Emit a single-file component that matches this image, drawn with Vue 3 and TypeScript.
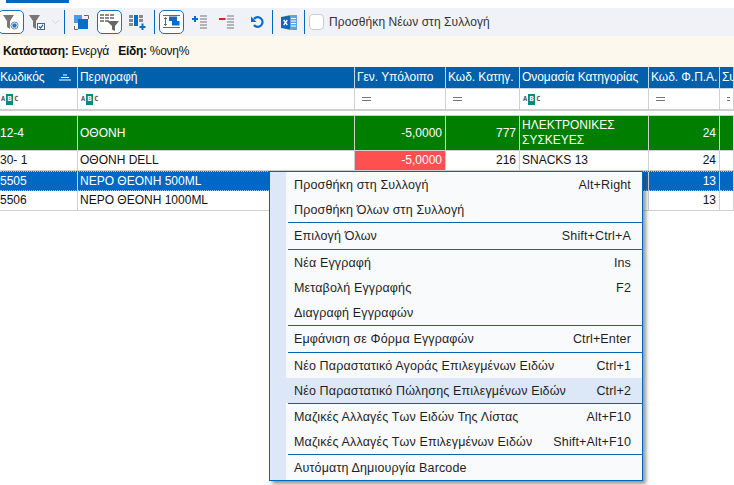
<script setup lang="ts">
type Cell = { text: string; right?: boolean; bg?: string };
type Row = { cls: string; cells: Cell[] };
type MenuItem = { label: string; key?: string; active?: boolean };
type MenuGroup = { tall?: boolean; items: MenuItem[] };

const columns = [
  { title: "Κωδικός", filter: "abc", sort: true },
  { title: "Περιγραφή", filter: "abc" },
  { title: "Γεν. Υπόλοιπο", filter: "eq" },
  { title: "Κωδ. Κατηγ.", filter: "eq" },
  { title: "Ονομασία Κατηγορίας", filter: "abc" },
  { title: "Κωδ. Φ.Π.Α.", filter: "eq" },
  { title: "Συ", filter: "eq" },
];

const rows: Row[] = [
  {
    cls: "row-green",
    cells: [
      { text: "12-4" },
      { text: "ΟΘΟΝΗ" },
      { text: "-5,0000", right: true },
      { text: "777", right: true },
      { text: "ΗΛΕΚΤΡΟΝΙΚΕΣ ΣΥΣΚΕΥΕΣ" },
      { text: "24", right: true },
      { text: "" },
    ],
  },
  {
    cls: "row-plain",
    cells: [
      { text: "30- 1" },
      { text: "ΟΘΟΝΗ DELL" },
      { text: "-5,0000", right: true, bg: "neg" },
      { text: "216", right: true },
      { text: "SNACKS 13" },
      { text: "24", right: true },
      { text: "" },
    ],
  },
  {
    cls: "row-selected",
    cells: [
      { text: "5505" },
      { text: "ΝΕΡΟ ΘΕΟΝΗ 500ML" },
      { text: "" },
      { text: "" },
      { text: "" },
      { text: "13", right: true },
      { text: "" },
    ],
  },
  {
    cls: "row-plain",
    cells: [
      { text: "5506" },
      { text: "ΝΕΡΟ ΘΕΟΝΗ 1000ML" },
      { text: "" },
      { text: "" },
      { text: "" },
      { text: "13", right: true },
      { text: "" },
    ],
  },
];

const menuGroups: MenuGroup[] = [
  {
    items: [
      { label: "Προσθήκη στη Συλλογή", key: "Alt+Right" },
      { label: "Προσθήκη Όλων στη Συλλογή" },
    ],
  },
  { items: [{ label: "Επιλογή Όλων", key: "Shift+Ctrl+A" }] },
  {
    tall: true,
    items: [
      { label: "Νέα Εγγραφή", key: "Ins" },
      { label: "Μεταβολή Εγγραφής", key: "F2" },
      { label: "Διαγραφή Εγγραφών" },
    ],
  },
  { items: [{ label: "Εμφάνιση σε Φόρμα Εγγραφών", key: "Ctrl+Enter" }] },
  {
    tall: true,
    items: [
      { label: "Νέο Παραστατικό Αγοράς Επιλεγμένων Ειδών", key: "Ctrl+1" },
      { label: "Νέο Παραστατικό Πώλησης Επιλεγμένων Ειδών", key: "Ctrl+2", active: true },
    ],
  },
  {
    items: [
      { label: "Μαζικές Αλλαγές Των Ειδών Της Λίστας", key: "Alt+F10" },
      { label: "Μαζικές Αλλαγές Των Επιλεγμένων Ειδών", key: "Shift+Alt+F10" },
    ],
  },
  { items: [{ label: "Αυτόματη Δημιουργία Barcode" }] },
];
</script>

<template>
  <div class="page">
    <div class="top-strip"><div class="top-tab"></div></div>

    <div class="toolbar">
      <button class="tool framed t-filter">
        <svg width="16" height="16" viewBox="0 0 16 16">
          <path d="M0 1h11L7 7v8L4 13V7z" fill="#777" />
          <circle cx="11.5" cy="11.5" r="3.5" fill="#fff" stroke="#7a8694" />
          <circle cx="11.5" cy="11.5" r="2.2" fill="#2a78c4" />
        </svg>
      </button>
      <button class="tool t-filter2">
        <svg width="16" height="16" viewBox="0 0 16 16">
          <path d="M0 1h11L7 7v8L4 13V7z" fill="#777" />
          <rect x="8.5" y="9.5" width="7" height="6" fill="#fff" stroke="#59646f" />
          <path d="M10 12.5l1.6 1.6 2.4-3.2" fill="none" stroke="#0067c0" stroke-width="1.3" />
        </svg>
      </button>
      <svg class="chev" width="9" height="6" viewBox="0 0 9 6">
        <path d="M1 1l3.5 3.5L8 1" fill="none" stroke="#cfd5dc" />
      </svg>
      <span class="divider"></span>
      <button class="tool t-copy">
        <svg width="15" height="15" viewBox="0 0 15 15">
          <path d="M10 .5h4.5V4M.5 11v3.5H4" fill="none" stroke="#666" />
          <rect x="0" y="0" width="8" height="8" fill="#4f9be0" />
          <rect x="4" y="4" width="10" height="10" fill="#0a6cc9" />
        </svg>
      </button>
      <button class="tool framed t-grid">
        <svg width="20" height="17" viewBox="0 0 20 17">
          <g fill="#8a8a8a">
            <rect x="0" y="0" width="4" height="2" /><rect x="5" y="0" width="4" height="2" /><rect x="10" y="0" width="4" height="2" />
            <rect x="0" y="3" width="4" height="2" /><rect x="5" y="3" width="4" height="2" /><rect x="10" y="3" width="4" height="2" />
            <rect x="0" y="6" width="4" height="2" /><rect x="5" y="6" width="4" height="2" />
          </g>
          <path d="M7 7h12l-4 5v5l-3-1.5V12z" fill="#666" />
        </svg>
      </button>
      <button class="tool t-cols">
        <svg width="17" height="15" viewBox="0 0 17 15">
          <rect x="0" y="0" width="4" height="3" fill="#8a8a8a" />
          <rect x="0" y="4" width="4" height="3" fill="#8a8a8a" />
          <rect x="0" y="8" width="4" height="3" fill="#8a8a8a" />
          <rect x="5" y="0" width="4" height="11" fill="#0a6cc9" />
          <rect x="10" y="0" width="4" height="3" fill="#8a8a8a" />
          <rect x="10" y="4" width="4" height="3" fill="#8a8a8a" />
          <path d="M13.5 8.5V15M10.5 12h6" stroke="#0a6cc9" stroke-width="2" />
        </svg>
      </button>
      <span class="divider"></span>
      <button class="tool framed t-size">
        <svg width="17" height="14" viewBox="0 0 17 14">
          <path d="M0 .5h17M0 12.5h17" stroke="#666" />
          <path d="M2.5 2.5v8M1 4l1.5-1.5L4 4M1 9l1.5 1.5L4 9" fill="none" stroke="#666" />
          <rect x="6" y="1.5" width="8" height="4.5" fill="#0a6cc9" />
          <rect x="9" y="6" width="7.5" height="4.5" fill="#0a6cc9" />
        </svg>
      </button>
      <button class="tool t-plus">
        <svg width="16" height="14" viewBox="0 0 16 14">
          <path d="M3 1v6M0 4h6" stroke="#0a6cc9" stroke-width="2" />
          <path d="M8 1h7M8 4h7M8 7h7M8 10h7M8 13h7" stroke="#777" />
        </svg>
      </button>
      <button class="tool t-minus">
        <svg width="16" height="14" viewBox="0 0 16 14">
          <path d="M0 4h6.5" stroke="#d6202a" stroke-width="2" />
          <path d="M8 1h7M8 4h7M8 7h7M8 10h7M8 13h7" stroke="#777" />
        </svg>
      </button>
      <button class="tool t-undo">
        <svg width="14" height="12" viewBox="0 0 14 12">
          <path d="M3 3A4.8 4.8 0 1 1 3 9" fill="none" stroke="#0a6cc9" stroke-width="2.2" />
          <path d="M0 0.5v5.5h5.5z" fill="#0a6cc9" />
        </svg>
      </button>
      <span class="divider"></span>
      <button class="tool t-excel">
        <svg width="16" height="15" viewBox="0 0 16 15">
          <path d="M4 1l7-1h5v15h-5l-7-1z" fill="#5fa3e2" />
          <path d="M10 3.5h5M10 6h5M10 8.5h5M10 11h5" stroke="#fff" />
          <path d="M0 2l9-1.5v14L0 13z" fill="#1167bd" />
          <path d="M2.7 5l3.6 5M6.3 5l-3.6 5" stroke="#fff" stroke-width="1.3" />
        </svg>
      </button>
      <span class="divider"></span>
      <label class="check">
        <span class="box"></span>
        <span>Προσθήκη Νέων στη Συλλογή</span>
      </label>
    </div>

    <div class="status">
      <b>Κατάσταση:</b> Ενεργά&nbsp;&nbsp; <b>Είδη:</b> %ονη%
    </div>

    <div class="grid">
      <div class="g-row head">
        <div v-for="c in columns" :key="c.title" class="cell">
          <span class="head-title">{{ c.title }}</span>
          <svg v-if="c.sort" class="sort" width="12" height="7" viewBox="0 0 12 7">
            <path d="M4 1h4M2 3.5h8M0 6h12" stroke="#fff" />
          </svg>
        </div>
      </div>
      <div class="g-row filter">
        <div v-for="c in columns" :key="c.title" class="cell">
          <span v-if="c.filter === 'abc'" class="abc">A<i>B</i>C</span>
          <span v-else class="eq"></span>
        </div>
      </div>
      <div class="spacer"></div>
      <div v-for="(r, i) in rows" :key="i" class="g-row" :class="r.cls">
        <div
          v-for="(cell, j) in r.cells"
          :key="j"
          class="cell"
          :class="{ right: cell.right, neg: cell.bg === 'neg' }"
        >
          {{ cell.text }}
        </div>
      </div>
    </div>

    <div class="menu">
      <template v-for="(group, g) in menuGroups" :key="g">
        <div v-if="g > 0" class="sep" :class="{ tall: group.tall }"></div>
        <div
          v-for="item in group.items"
          :key="item.label"
          class="menu-item"
          :class="{ active: item.active }"
        >
          <span>{{ item.label }}</span>
          <span v-if="item.key">{{ item.key }}</span>
        </div>
      </template>
    </div>
  </div>
</template>

<style scoped>
.page {
  position: relative;
  width: 734px;
  height: 485px;
  overflow: hidden;
  background: #fff;
  font-family: "Liberation Sans", Arial, sans-serif;
  font-size: 12px;
  color: #1a1a1a;
}

.top-strip {
  height: 8px;
}

.top-tab {
  width: 63px;
  height: 3px;
  margin-left: 6px;
  background: #0067c0;
}

.toolbar {
  display: flex;
  align-items: center;
  height: 28px;
  background: #f0f2f7;
}

.tool {
  display: flex;
  align-items: center;
  justify-content: center;
  flex: none;
  box-sizing: border-box;
  height: 24px;
  padding: 0;
  background: none;
  border: 1px solid transparent;
  border-radius: 5px;
}

.tool.framed {
  background: #fff;
  border: 1.5px solid #1a6fb5;
}

.t-filter {
  width: 26px;
  margin-left: -2px;
}

.t-filter2 {
  width: 26px;
}

.chev {
  flex: none;
  margin-left: 1px;
}

.divider {
  flex: none;
  width: 1px;
  height: 24px;
  margin: 0 4px;
  background: #0067c0;
}

.t-copy {
  width: 25px;
}

.t-grid {
  width: 25px;
  margin-left: 3px;
}

.t-cols {
  width: 26px;
  margin-left: 2px;
}

.t-size {
  width: 25px;
}

.t-plus {
  width: 27px;
  margin-left: 2px;
}

.t-minus {
  width: 28px;
}

.t-undo {
  width: 21px;
  margin-left: 6px;
}

.t-excel {
  width: 23px;
}

.check {
  display: flex;
  align-items: center;
  gap: 5px;
  color: #333;
  letter-spacing: 0.07px;
}

.box {
  box-sizing: border-box;
  width: 15px;
  height: 16px;
  background: #fff;
  border: 1px solid #c6ccd6;
  border-radius: 4px;
}

.status {
  height: 31px;
  padding-left: 3px;
  line-height: 30px;
  background: #fdf8ee;
  color: #111;
  letter-spacing: -0.28px;
}

.grid {
  display: flex;
  flex-direction: column;
}

.g-row {
  display: grid;
  box-sizing: border-box;
  grid-template-columns: 78px 277px 91px 74px 129px 71px 14px;
}

.cell {
  display: flex;
  align-items: center;
  min-width: 0;
  padding: 0 3px 0 2px;
  border-right: 1px solid #d0d0d0;
  border-bottom: 1px solid #d0d0d0;
  line-height: 15px;
  overflow: hidden;
}

.cell:first-child {
  padding-left: 0;
}

.cell.right {
  justify-content: flex-end;
}

.head {
  height: 22px;
  background: #0060ac;
  color: #fff;
}

.head .cell {
  justify-content: space-between;
  border-bottom: 1px solid #c8d6e4;
  border-right-color: #c8d6e4;
  white-space: nowrap;
  letter-spacing: -0.05px;
}

.sort {
  flex: none;
  margin-right: 3px;
}

.filter {
  height: 22px;
}

.filter .cell {
  padding-left: 3px;
  border-bottom: 2px solid #d0d0d0;
}

.filter .cell:first-child {
  padding-left: 1px;
}

.abc {
  display: inline-flex;
  align-items: center;
  font-family: "DejaVu Sans Mono", monospace;
  font-size: 7px;
  font-weight: 700;
  color: #555;
}

.abc i {
  display: block;
  width: 7px;
  height: 11px;
  margin: 0 1px;
  font-style: normal;
  line-height: 11px;
  text-align: center;
  background: #0a8a78;
  color: #fff;
}

.eq {
  width: 9px;
  height: 2px;
  margin-left: 4px;
  border-top: 1px solid #777;
  border-bottom: 1px solid #777;
}

.spacer {
  box-sizing: border-box;
  height: 5px;
  background: #fff;
  border-bottom: 1px solid #d0d0d0;
}

.row-green {
  height: 35px;
  background: #007e00;
  color: #fff;
}

.row-plain {
  height: 20px;
  background: #fff;
  color: #111;
}

.row-selected {
  height: 20px;
  background: #0068c4;
  color: #fff;
  border-top: 1px dotted #9fc4e6;
}

.row-selected .cell {
  border-bottom: 1px dotted #9fc4e6;
}

.neg {
  background: #ff5050;
  color: #fff;
}

.menu {
  position: absolute;
  left: 269px;
  top: 171px;
  box-sizing: border-box;
  width: 374px;
  background: linear-gradient(to right, #dce7f7 16px, #f9fafb 16px);
  border: 1px solid #0067b8;
  box-shadow: 3px 3px 4px rgba(60, 60, 60, 0.55);
}

.menu-item {
  display: flex;
  justify-content: space-between;
  align-items: center;
  box-sizing: border-box;
  height: 25px;
  padding: 0 11px 0 24px;
  color: #1f1f1f;
  font-size: 12.5px;
  letter-spacing: 0.15px;
  white-space: nowrap;
}

.menu-item.active {
  background: #dce7f7;
}

.sep {
  height: 1px;
  margin-left: 18px;
  background: #0067b8;
}

.sep.tall {
  margin-top: 1px;
}
</style>

<style>
html,
body {
  margin: 0;
  background: #fff;
}
</style>
